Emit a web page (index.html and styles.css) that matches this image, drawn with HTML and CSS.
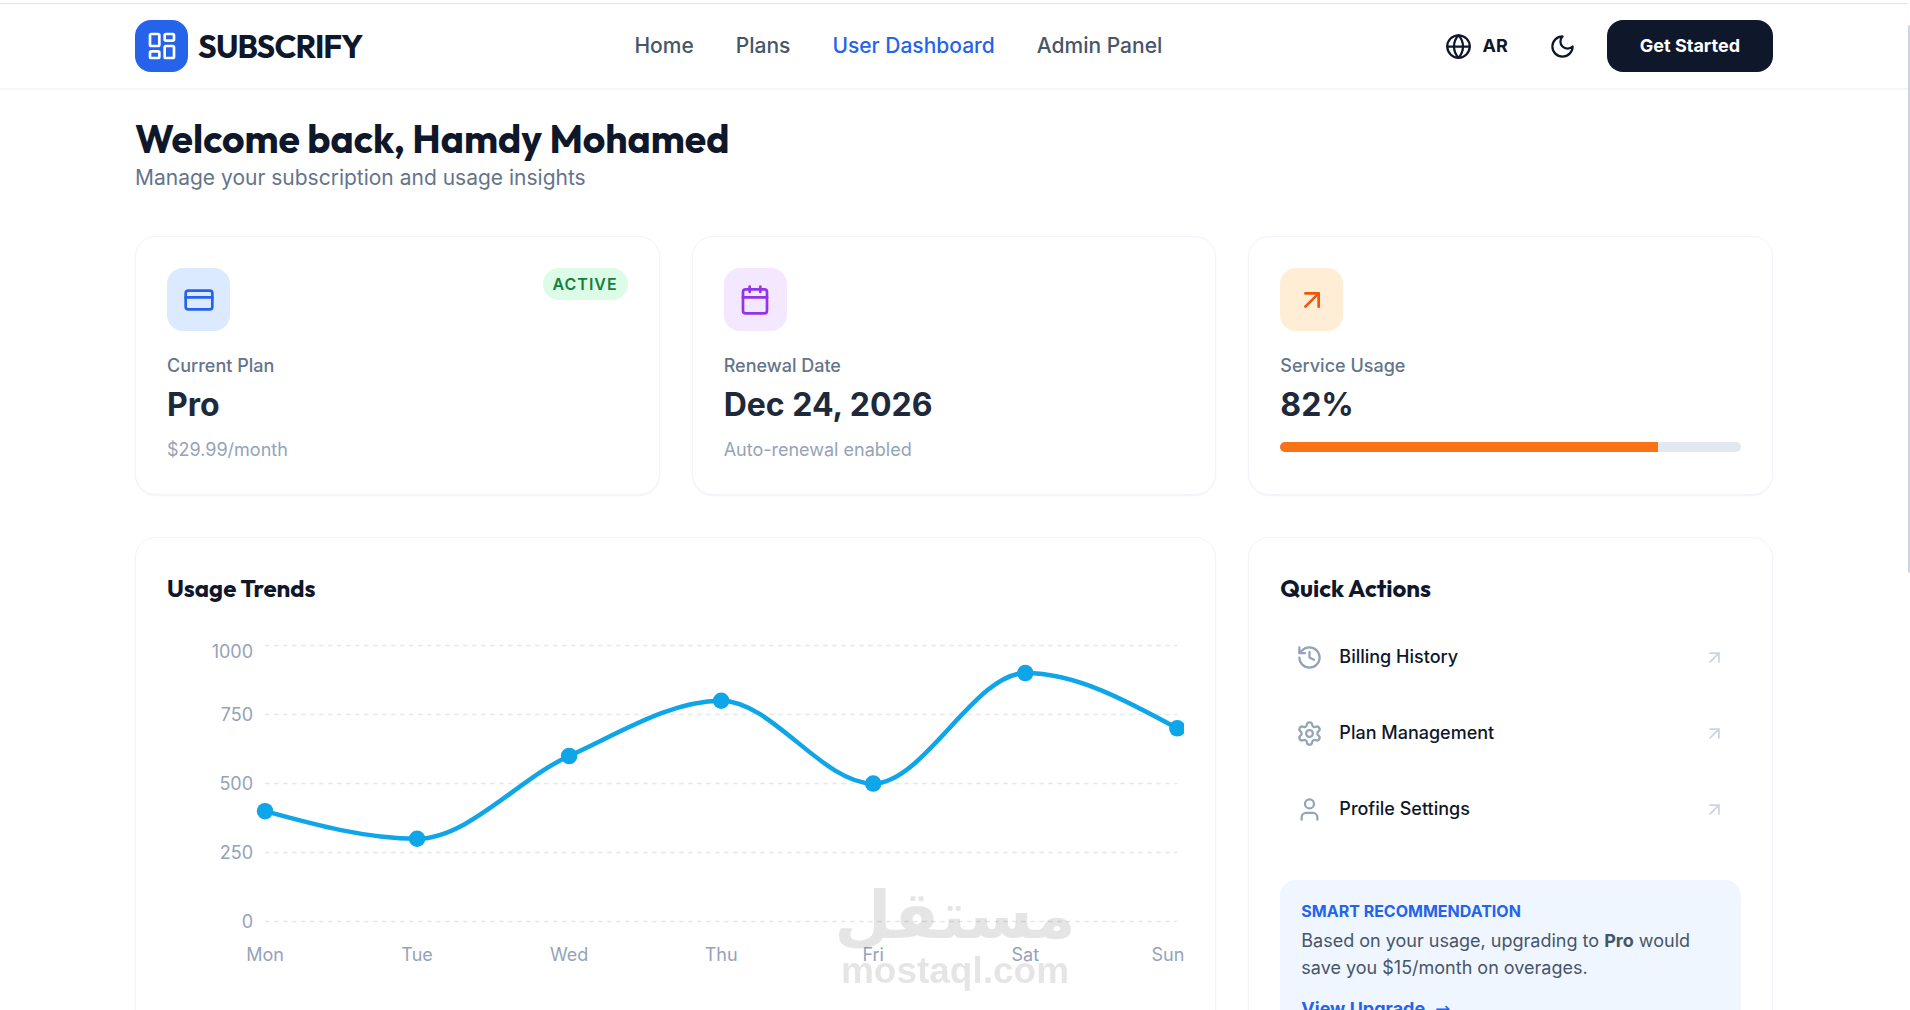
FILE: index.html
```html
<!DOCTYPE html>
<html lang="en">
<head>
  <meta charset="utf-8">
  <meta name="viewport" content="width=device-width, initial-scale=1">
  <title>Subscrify – User Dashboard</title>
  <link rel="stylesheet" href="styles.css">
</head>
<body>
  <header class="site-header">
    <div class="container header-row">
      <a class="brand" href="#">
        <span class="brand-mark">
          <svg class="icon icon-lg" viewBox="0 0 24 24" aria-hidden="true"><rect x="3" y="3" width="7" height="9" rx="1"/><rect x="14" y="3" width="7" height="5" rx="1"/><rect x="14" y="12" width="7" height="9" rx="1"/><rect x="3" y="16" width="7" height="5" rx="1"/></svg>
        </span>
        <span class="brand-name">SUBSCRIFY</span>
      </a>
      <nav class="main-nav" aria-label="Main">
        <a href="#">Home</a>
        <a href="#">Plans</a>
        <a class="is-active" href="#" aria-current="page">User Dashboard</a>
        <a href="#">Admin Panel</a>
      </nav>
      <div class="header-tools">
        <button class="tool-button" type="button">
          <svg class="icon" viewBox="0 0 24 24" aria-hidden="true"><circle cx="12" cy="12" r="10"/><path d="M12 2a14.5 14.5 0 0 0 0 20 14.5 14.5 0 0 0 0-20"/><path d="M2 12h20"/></svg>
          <span>AR</span>
        </button>
        <button class="tool-button" type="button" aria-label="Toggle dark mode">
          <svg class="icon" viewBox="0 0 24 24" aria-hidden="true"><path d="M12 3a6 6 0 0 0 9 9 9 9 0 1 1-9-9Z"/></svg>
        </button>
        <button class="cta" type="button">Get Started</button>
      </div>
    </div>
  </header>

  <main class="container">
    <div class="intro">
      <h1>Welcome back, Hamdy Mohamed</h1>
      <p>Manage your subscription and usage insights</p>
    </div>

    <div class="dashboard">
      <section class="card">
        <div class="card-top">
          <span class="tile tile-blue">
            <svg class="icon icon-lg" viewBox="0 0 24 24" aria-hidden="true"><rect x="2" y="5" width="20" height="14" rx="2"/><path d="M2 10h20"/></svg>
          </span>
          <span class="badge">ACTIVE</span>
        </div>
        <p class="stat-label">Current Plan</p>
        <p class="stat-value">Pro</p>
        <p class="stat-note">$29.99/month</p>
      </section>

      <section class="card">
        <div class="card-top">
          <span class="tile tile-purple">
            <svg class="icon icon-lg" viewBox="0 0 24 24" aria-hidden="true"><path d="M8 2v4"/><path d="M16 2v4"/><rect x="3" y="4" width="18" height="18" rx="2"/><path d="M3 10h18"/></svg>
          </span>
        </div>
        <p class="stat-label">Renewal Date</p>
        <p class="stat-value">Dec 24, 2026</p>
        <p class="stat-note">Auto-renewal enabled</p>
      </section>

      <section class="card">
        <div class="card-top">
          <span class="tile tile-orange">
            <svg class="icon icon-lg" viewBox="0 0 24 24" aria-hidden="true"><path d="M7 7h10v10"/><path d="M7 17 17 7"/></svg>
          </span>
        </div>
        <p class="stat-label">Service Usage</p>
        <p class="stat-value">82%</p>
        <div class="meter" role="progressbar" aria-label="Service usage" aria-valuemin="0" aria-valuemax="100" aria-valuenow="82">
          <div class="meter-fill" style="width: 82%"></div>
        </div>
      </section>

      <section class="card card-wide">
        <h2>Usage Trends</h2>
        <svg class="chart" viewBox="0 0 1017 336" role="img" aria-label="Usage by weekday">
          <g class="chart-grid">
            <path d="M98 7.5H1010"/><path d="M98 76.5H1010"/><path d="M98 145.5H1010"/><path d="M98 214.5H1010"/><path d="M98 283.5H1010"/>
          </g>
          <g class="chart-text" text-anchor="end">
            <text x="86" y="20">1000</text>
            <text x="86" y="83">750</text>
            <text x="86" y="152">500</text>
            <text x="86" y="221">250</text>
            <text x="86" y="290">0</text>
          </g>
          <g class="chart-text" text-anchor="middle">
            <text x="98" y="323">Mon</text>
            <text x="250" y="323">Tue</text>
            <text x="402" y="323">Wed</text>
            <text x="554" y="323">Thu</text>
            <text x="706" y="323">Fri</text>
            <text x="858" y="323">Sat</text>
            <text x="1017" y="323" text-anchor="end">Sun</text>
          </g>
          <path class="chart-line" d="M98 173.1C148.67 186.9 199.33 200.7 250 200.7C300.67 200.7 351.33 140.9 402 117.9C452.67 94.9 503.33 62.7 554 62.7C604.67 62.7 655.33 145.5 706 145.5C756.67 145.5 807.33 35.1 858 35.1C908.67 35.1 959.33 62.7 1010 90.3"/>
          <g class="chart-dots">
            <circle cx="98" cy="173.1" r="8.25"/><circle cx="250" cy="200.7" r="8.25"/><circle cx="402" cy="117.9" r="8.25"/><circle cx="554" cy="62.7" r="8.25"/><circle cx="706" cy="145.5" r="8.25"/><circle cx="858" cy="35.1" r="8.25"/><circle cx="1010" cy="90.3" r="8.25"/>
          </g>
        </svg>
      </section>

      <section class="card">
        <h2>Quick Actions</h2>
        <div class="actions">
          <a class="action" href="#">
            <svg class="icon action-icon" viewBox="0 0 24 24" aria-hidden="true"><path d="M3 12a9 9 0 1 0 9-9 9.75 9.75 0 0 0-6.74 2.74L3 8"/><path d="M3 3v5h5"/><path d="M12 7v5l4 2"/></svg>
            <span>Billing History</span>
            <svg class="icon action-arrow" viewBox="0 0 24 24" aria-hidden="true"><path d="M7 7h10v10"/><path d="M7 17 17 7"/></svg>
          </a>
          <a class="action" href="#">
            <svg class="icon action-icon" viewBox="0 0 24 24" aria-hidden="true"><path d="M9.671 4.136a2.34 2.34 0 0 1 4.659 0 2.34 2.34 0 0 0 3.319 1.915 2.34 2.34 0 0 1 2.33 4.033 2.34 2.34 0 0 0 0 3.831 2.34 2.34 0 0 1-2.33 4.033 2.34 2.34 0 0 0-3.319 1.915 2.34 2.34 0 0 1-4.659 0 2.34 2.34 0 0 0-3.32-1.915 2.34 2.34 0 0 1-2.33-4.033 2.34 2.34 0 0 0 0-3.831A2.34 2.34 0 0 1 6.35 6.051a2.34 2.34 0 0 0 3.319-1.915"/><circle cx="12" cy="12" r="3"/></svg>
            <span>Plan Management</span>
            <svg class="icon action-arrow" viewBox="0 0 24 24" aria-hidden="true"><path d="M7 7h10v10"/><path d="M7 17 17 7"/></svg>
          </a>
          <a class="action" href="#">
            <svg class="icon action-icon" viewBox="0 0 24 24" aria-hidden="true"><path d="M19 21v-2a4 4 0 0 0-4-4H9a4 4 0 0 0-4 4v2"/><circle cx="12" cy="7" r="4"/></svg>
            <span>Profile Settings</span>
            <svg class="icon action-arrow" viewBox="0 0 24 24" aria-hidden="true"><path d="M7 7h10v10"/><path d="M7 17 17 7"/></svg>
          </a>
        </div>
        <div class="tip">
          <h3>SMART RECOMMENDATION</h3>
          <p>Based on your usage, upgrading to <strong>Pro</strong> would save you $15/month on overages.</p>
          <a class="tip-link" href="#">View Upgrade <span class="tip-arrow">→</span></a>
        </div>
      </section>
    </div>
  </main>

  <div class="watermark" aria-hidden="true">
    <span class="watermark-ar" lang="ar" dir="rtl">مستقل</span>
    <span class="watermark-en">mostaql.com</span>
  </div>
  <div class="scroll-thumb" aria-hidden="true"></div>
</body>
</html>
```

FILE: styles.css
```css
* {
  box-sizing: border-box;
}

html {
  scrollbar-width: none;
}

body {
  margin: 0;
  padding: 3px 2px 0 0;
  background: #fff;
  color: #0f172a;
  font-family: Inter, "Liberation Sans", sans-serif;
  font-size: 18px;
  line-height: 26px;
}

h1,
h2,
h3,
p {
  margin: 0;
}

h1,
h2,
.brand-name {
  font-family: Outfit, Lato, sans-serif;
  font-weight: 700;
}

a {
  color: inherit;
  text-decoration: none;
}

button {
  border: 0;
  background: none;
  color: inherit;
  font: inherit;
  cursor: pointer;
}

.container {
  max-width: 1680px;
  margin: 0 auto;
  padding: 0 21px;
}

.icon {
  flex: none;
  width: 27px;
  height: 27px;
  fill: none;
  stroke: currentColor;
  stroke-width: 2;
  stroke-linecap: round;
  stroke-linejoin: round;
}

.icon-lg {
  width: 32px;
  height: 32px;
}

/* Header */

.site-header {
  border-top: 1px solid #e5e5e5;
  border-bottom: 1px solid #f1f5f9;
  box-shadow: 0 1px 2px rgba(0, 0, 0, 0.04);
}

.header-row {
  display: flex;
  align-items: center;
  justify-content: space-between;
  padding-top: 16px;
  padding-bottom: 16px;
}

.brand {
  display: flex;
  align-items: center;
  gap: 10px;
}

.brand-mark {
  display: grid;
  place-items: center;
  width: 53px;
  height: 52px;
  border-radius: 16px;
  background: #2563eb;
  color: #fff;
}

.brand-name {
  font-size: 32px;
  line-height: 42px;
  letter-spacing: -1px;
}

.main-nav {
  display: flex;
  gap: 42px;
  color: #475569;
  font-size: 21px;
  font-weight: 500;
}

.main-nav .is-active {
  color: #2563eb;
}

.header-tools {
  display: flex;
  align-items: center;
  gap: 21px;
}

.tool-button {
  display: flex;
  align-items: center;
  gap: 11px;
  padding: 10px;
  font-weight: 700;
}

.cta {
  padding: 13px 33px;
  border-radius: 16px;
  background: #0f172a;
  color: #fff;
  font-weight: 700;
}

/* Page intro */

.intro {
  padding: 28px 0 42px;
}

h1 {
  font-size: 39px;
  line-height: 44px;
}

.intro p {
  color: #64748b;
  font-size: 21px;
  line-height: 33px;
}

/* Cards */

.dashboard {
  display: grid;
  grid-template-columns: repeat(3, minmax(0, 1fr));
  gap: 42px 32px;
  padding-bottom: 42px;
}

.card {
  padding: 31px;
  border: 1px solid #f1f5f9;
  border-radius: 21px;
  background: #fff;
  box-shadow: 0 1px 2px rgba(0, 0, 0, 0.05);
}

.card-wide {
  grid-column: span 2;
}

.card-top {
  display: flex;
  align-items: flex-start;
  justify-content: space-between;
  margin-bottom: 22px;
}

.tile {
  display: grid;
  place-items: center;
  width: 63px;
  height: 63px;
  border-radius: 16px;
}

.tile-blue {
  background: #dbeafe;
  color: #2563eb;
}

.tile-purple {
  background: #f3e8ff;
  color: #9333ea;
}

.tile-orange {
  background: #ffedd5;
  color: #ea580c;
}

.badge {
  padding: 5px 10px;
  border-radius: 16px;
  background: #dcfce7;
  color: #15803d;
  font-size: 16px;
  font-weight: 600;
  line-height: 22px;
  letter-spacing: 1px;
}

.stat-label {
  color: #64748b;
  font-weight: 500;
}

.stat-value {
  margin-top: 5px;
  color: #1e293b;
  font-size: 32px;
  font-weight: 700;
  line-height: 42px;
}

.stat-note {
  margin-top: 11px;
  color: #94a3b8;
}

.meter {
  height: 10px;
  margin-top: 16px;
  overflow: hidden;
  border-radius: 5px;
  background: #e2e8f0;
}

.meter-fill {
  height: 100%;
  background: #f97316;
}

h2 {
  font-size: 24px;
  line-height: 38px;
}

/* Usage chart */

.chart {
  display: block;
  width: 100%;
  margin-top: 31px;
}

.chart-grid {
  stroke: #e2e8f0;
  stroke-width: 1.5;
  stroke-dasharray: 4.5 4.5;
}

.chart-text {
  fill: #94a3b8;
  font-size: 18px;
}

.chart-line {
  fill: none;
  stroke: #0ea5e9;
  stroke-width: 4.5;
}

.chart-dots {
  fill: #0ea5e9;
}

/* Quick actions */

.actions {
  display: grid;
  gap: 16px;
  margin-top: 20px;
}

.action {
  display: flex;
  align-items: center;
  gap: 16px;
  height: 60px;
  padding: 0 16px;
  border-radius: 16px;
  font-weight: 500;
}

.action-icon {
  color: #94a3b8;
}

.action-arrow {
  width: 21px;
  height: 21px;
  margin-left: auto;
  color: #cbd5e1;
}

.tip {
  margin-top: 41px;
  padding: 21px;
  border-radius: 16px;
  background: #eff6ff;
}

.tip h3 {
  color: #2563eb;
  font-size: 16px;
  font-weight: 700;
  line-height: 21px;
}

.tip p {
  margin-top: 5px;
  color: #475569;
  line-height: 27px;
}

.tip-link {
  display: inline-flex;
  gap: 10px;
  margin-top: 15px;
  color: #2563eb;
  font-weight: 700;
}

.tip-arrow {
  font-family: "DejaVu Sans", sans-serif;
  font-weight: 400;
}

/* Floating overlays */

.watermark {
  position: fixed;
  bottom: 21px;
  left: 50%;
  display: flex;
  flex-direction: column;
  align-items: center;
  transform: translateX(-50%);
  color: #000;
  opacity: 0.1;
  pointer-events: none;
}

.watermark-ar {
  font-family: "DejaVu Sans", sans-serif;
  font-size: 66px;
  font-weight: 700;
  line-height: 72px;
}

.watermark-en {
  font-family: "Liberation Sans", sans-serif;
  font-size: 37px;
  font-weight: 700;
  line-height: 37px;
}

.scroll-thumb {
  position: fixed;
  top: 25px;
  right: 0;
  width: 2px;
  height: 548px;
  border-radius: 2px 0 0 2px;
  background: #cbd5e1;
}
```
